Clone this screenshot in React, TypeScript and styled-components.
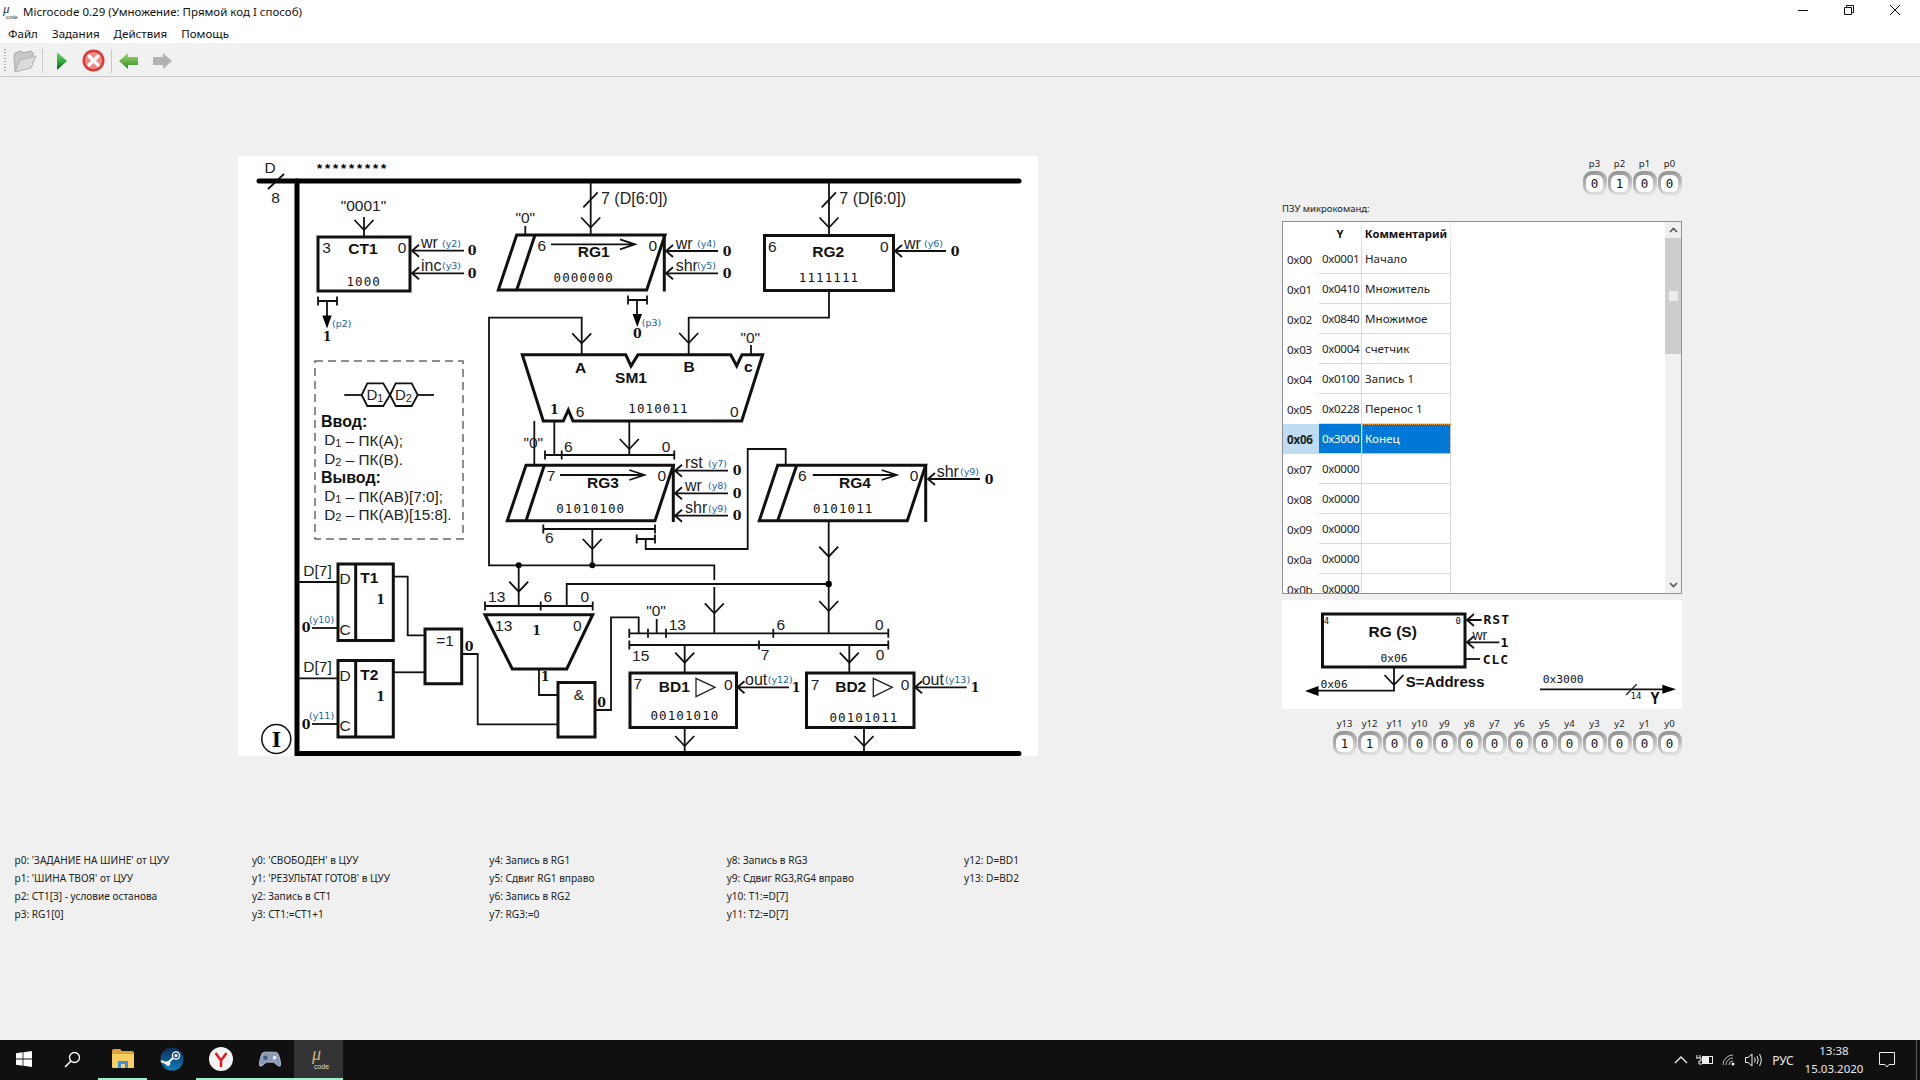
import React from "react";
import styled, { createGlobalStyle } from "styled-components";

const Global = createGlobalStyle`
  html, body { margin: 0; padding: 0; background: #f0f0f0; }
  #root { width: 1920px; height: 1080px; overflow: hidden; }
`;

const UI = `"Noto Sans", "Open Sans", sans-serif`;
const Page = styled.div`
  width: 1920px; height: 1080px; display: flex; flex-direction: column;
  background: #f0f0f0; color: #111; font-family: ${UI}; overflow: hidden;
`;
const TitleBar = styled.div`height: 23px; background: #fff; display: flex; align-items: center; padding-left: 3px;`;
const TitleLogo = styled.span`
  width: 20px; height: 16px; display: flex; flex-direction: column; line-height: 1; color: #333; margin-right: 0;
  font-family: "Liberation Serif", serif;
`;
const Mu = styled.i`font-size: 13px; height: 9px; line-height: 9px; margin-left: 0;`;
const Code = styled.span`font: 5.5px "Liberation Sans", sans-serif; margin-left: 3px; margin-top: 1px;`;
const TitleText = styled.span`font-size: 11.5px; color: #111;`;
const WinButtons = styled.div`margin-left: auto; display: flex; padding-right: 2px; align-self: flex-start; margin-top: 0;`;
const WinBtn = styled.span`width: 46px; height: 20px; display: flex; align-items: center; justify-content: center;`;
const MenuBar = styled.div`height: 20px; background: #fff; display: flex; align-items: center; padding-left: 8px; gap: 14px; font-size: 11.6px;`;
const MenuItem = styled.span`color: #111; padding-bottom: 0;`;
const ToolBar = styled.div`height: 31px; padding-top: 2px; display: flex; align-items: center; border-bottom: 1px solid #c8c8c8; background: #f1f1f1; padding-left: 4px;`;
const Grip = styled.span`width: 2px; height: 24px; margin-right: 6px; background: repeating-linear-gradient(#aaa 0 1px, transparent 1px 3px);`;
const ToolIcon = styled.svg<{ $ml?: number }>`margin-left: ${p => p.$ml ?? 0}px; flex: none;`;
const ToolSep = styled.span<{ $ml: number }>`width: 1px; height: 24px; background: #c9c9c9; margin-left: ${p => p.$ml}px;`;

const Main = styled.div`display: flex; padding: 79px 0 0 238px; align-items: flex-start;`;
const DiagramSvg = styled.svg`width: 800px; height: 600px; display: block; background: #fff; flex: none;`;
const RightCol = styled.div`width: 400px; margin-left: 244px; display: flex; flex-direction: column; padding-top: 1px;`;

const LightRow = styled.div<{ $mt?: number }>`display: flex; justify-content: flex-end; margin-top: ${p => p.$mt ?? 0}px; padding-right: 0;`;
const LightCell = styled.div`width: 25px; display: flex; flex-direction: column; align-items: center;`;
const LightName = styled.span`height: 14px; line-height: 14px; font-size: 9.5px; color: #222;`;
const Light = styled.span`
  width: 24px; height: 24px; border-radius: 9px; display: flex; align-items: center; justify-content: center;
  background: linear-gradient(160deg, #8c8c8c 0%, #b5b5b5 50%, #e2e2e2 85%, #bbb 100%);
`;
const LightFace = styled.span`
  width: 17px; height: 17px; border-radius: 6px; background: #fff; text-align: center;
  font: 12.5px/17px "DejaVu Sans Mono", monospace; color: #111;
`;

const RomLabel = styled.div`height: 14px; line-height: 14px; margin-top: 7px; font-size: 9.5px; color: #222;`;
const RomBox = styled.div`height: 373px; margin-top: 5px; box-sizing: border-box; border: 1px solid #8c9098; background: #fff; display: flex;`;
const RomTable = styled.div`flex: 1; overflow: hidden;`;
const RomRow = styled.div<{ $head?: boolean }>`
  display: grid; grid-template-columns: 36px 43px 89px; height: ${p => (p.$head ? 22 : 30)}px;
  font-size: 11.6px;
`;
const RowHead = styled.div<{ $sel?: boolean }>`
  display: flex; align-items: center; padding-left: 4px; color: #222; letter-spacing: ${p => (p.$sel ? "-.2px" : "-.3px")};
  background: ${p => (p.$sel ? "#bfdcf3" : "#fff")}; font-weight: ${p => (p.$sel ? 700 : 400)};
`;
const Cell = styled.div<{ $sel?: boolean; $focus?: boolean; $code?: boolean }>`
  box-sizing: border-box; display: flex; align-items: center; padding-left: 3px;
  letter-spacing: ${p => (p.$code ? "-.35px" : "0")};
  border-right: 1px solid #d9d9d9; border-bottom: 1px solid #d9d9d9; white-space: nowrap;
  background: ${p => (p.$sel ? "#0078d7" : "#fff")}; color: ${p => (p.$sel ? "#fff" : "#222")};
  outline: ${p => (p.$focus ? "1px dotted #f0a040" : "none")}; outline-offset: -1px;
`;
const HeadCell = styled.div`
  display: flex; align-items: center; justify-content: center; font-weight: 700; font-size: 11.3px; color: #111;
  border-right: 1px solid #ececec; box-sizing: border-box;
`;
const Scroll = styled.div`width: 16px; background: #f0f0f0; display: flex; flex-direction: column; align-items: center;`;
const ScrollBtn = styled.span`height: 16px; width: 16px; display: flex; align-items: center; justify-content: center; flex: none;`;
const Thumb = styled.span`width: 16px; height: 116px; background: #cdcdcd; display: flex; align-items: center; justify-content: center; flex: none;`;
const ThumbMark = styled.span`width: 9px; height: 10px; background: #ededed;`;
const ScrollFill = styled.span`flex: 1;`;
const RgSvg = styled.svg`width: 400px; height: 109px; display: block; margin-top: 6px; background: #fff;`;

const Legend = styled.div`
  margin-top: 95px; padding-left: 14.5px; display: grid; grid-auto-flow: column;
  grid-template-rows: repeat(4, 18px); grid-auto-columns: 237.4px; font-size: 10.1px; color: #222;
`;
const LegendItem = styled.div`line-height: 18px; white-space: nowrap;`;

const TaskBar = styled.div`
  position: absolute; left: 0; top: 1040px; width: 1920px; height: 40px; background: #101010; display: flex; align-items: center; color: #fff;
`;
const TaskBtn = styled.span<{ $w?: number; $on?: boolean; $active?: boolean }>`
  width: ${p => p.$w ?? 49}px; height: 40px; box-sizing: border-box; display: flex; align-items: center; justify-content: center; flex: none;
  background: ${p => (p.$active ? "#333" : "transparent")};
  border-bottom: 2px solid ${p => (p.$on ? "#9ff0cf" : "transparent")};
  background-clip: border-box;
`;
const Tray = styled.div`margin-left: auto; display: flex; align-items: center; height: 40px;`;
const TrayIcon = styled.span<{ $w: number }>`width: ${p => p.$w}px; display: flex; align-items: center; justify-content: center; flex: none; font-size: 12px; color: #e8e8e8;`;
const Clock = styled.span`width: 66px; display: flex; flex-direction: column; align-items: center; font-size: 11.5px; line-height: 18px; color: #e8e8e8; flex: none;`;
const ShowDesktop = styled.span`width: 1px; height: 40px; background: #5a5a5a; margin-left: 9px; margin-right: 3px;`;
const TaskMu = styled.span`display: flex; flex-direction: column; font-family: "Liberation Serif", serif; line-height: 1;`;
const TaskMuTop = styled.i`font-size: 18px; height: 13px; line-height: 13px; color: #d8b080; margin-left: 4px;`;
const TaskMuCode = styled.span`font: 7px "Liberation Sans", sans-serif; color: #ddd; margin-left: 6px; margin-top: 2px;`;

/* diagram parts */
const Wire = styled.path`fill: none; stroke: #111; stroke-width: 1.8;`;
const Heavy = styled.path`fill: none; stroke: #111; stroke-width: 3; stroke-linejoin: miter;`;
const Solid = styled.path`fill: #000; stroke: none;`;
const Bus = styled.path`fill: none; stroke: #000; stroke-width: 5; stroke-linecap: round;`;
const Dashed = styled.rect`fill: none; stroke: #6a6a6a; stroke-width: 1.5; stroke-dasharray: 8 5;`;
const Thin = styled.path`fill: none; stroke: #222; stroke-width: 1.3;`;
const Lbl = styled.text<{ $start?: boolean; $size?: number }>`
  font: ${p => p.$size ?? 15.5}px "Liberation Sans", sans-serif; fill: #222;
  text-anchor: ${p => (p.$start ? "start" : "middle")}; dominant-baseline: central;
`;
const Note = styled.text`font: 15.3px "Liberation Sans", sans-serif; fill: #222; dominant-baseline: central;`;
const NoteHead = styled.text<{ $size?: number }>`font: bold ${p => p.$size ?? 16}px "Liberation Sans", sans-serif; fill: #111; dominant-baseline: central;`;
const Sub = styled.tspan`font-size: 11px;`;
const Name = styled.text`font: bold 15.5px "Liberation Sans", sans-serif; fill: #111; text-anchor: middle; dominant-baseline: central;`;
const Val = styled.text`font: 12.5px "DejaVu Sans Mono", monospace; letter-spacing: 1.1px; fill: #111; text-anchor: middle; dominant-baseline: central;`;
const Bit = styled.text`font: bold 12.5px "DejaVu Serif", serif; fill: #111; text-anchor: middle; dominant-baseline: central;`;
const Tag = styled.text`font: 9.5px "DejaVu Sans", sans-serif; fill: #1a5fa8; dominant-baseline: central;`;
const SigName = styled.text`font: 16px "Liberation Sans", sans-serif; fill: #222;`;
const Roman = styled.text`font: bold 24px "Liberation Serif", serif; fill: #000; text-anchor: middle; dominant-baseline: central;`;
const Stars = styled.text`font: bold 13.5px "Liberation Mono", monospace; fill: #000; letter-spacing: -.1px; dominant-baseline: central;`;
const Ring = styled.circle`fill: none; stroke: #111; stroke-width: 1.5;`;
const Dot = styled.circle`fill: #000;`;
const Mono = styled.text<{ $bold?: boolean; $size?: number; $mid?: boolean; $track?: number }>`
  font: ${p => (p.$bold ? "bold " : "")}${p => p.$size ?? 11.3}px "DejaVu Sans Mono", monospace; fill: #111;
  letter-spacing: ${p => p.$track ?? 0}px;
  text-anchor: ${p => (p.$mid ? "middle" : "start")}; dominant-baseline: central;
`;

const vA = (x: number, t: number) => `M${x - 9.5} ${t - 10}L${x} ${t}L${x + 9.5} ${t - 10}`;
const lA = (x: number, y: number) => `M${x + 7} ${y - 6}L${x} ${y}L${x + 7} ${y + 6}`;
const rA = (x: number, y: number) => `M${x - 15} ${y - 5}L${x} ${y}L${x - 15} ${y + 5}`;
const br = (x1: number, x2: number, y: number, t: number[] = []) =>
  `M${x1} ${y}H${x2}` + [x1, x2, ...t].map(v => `M${v} ${y - 4.5}v9`).join("");
const fDown = (x: number, tip: number) => `M${x - 4.7} ${tip - 13}H${x + 4.7}L${x} ${tip}Z`;

const wires: string[] = [
  "M268 189L284 174",
  "M364 217V237", vA(364, 230),
  br(318, 337, 301), "M327 301V316",
  br(628, 647, 300), "M637 300V316",
  "M525.3 226V235",
  "M590.7 183V234", vA(590.7, 227.5), "M583.3 207.3L597.7 192.3",
  "M829 183V234", vA(829, 227.5), "M821.7 207.3L836 192.3",
  "M829 291V317.7H688.7V354", vA(688.7, 343),
  "M581.7 354V317.7H489V565.3H714.3V580", "M714.3 587V633.3", vA(714.3, 613.3), vA(581.7, 343.3),
  "M751 345V354",
  "M534.3 421V465", "M554.3 421V455", "M629.3 421V455", vA(629.3, 449),
  br(545, 674.3, 455, [561.7]),
  br(543.3, 655, 529), "M592.3 529V565.3", vA(592.3, 549),
  br(636.7, 655, 539), "M645.7 539V549H747.7V449H785.7V465",
  "M828.7 521V633.3", vA(828.7, 556.7), vA(828.7, 611),
  "M518.7 565.3V606", vA(518.7, 591.7),
  "M566.7 606V584H828.7",
  br(485, 592.7, 606, [540.7]),
  "M539 669V695H557",
  "M596 710H611V617.3H638.7V633.3",
  br(629.3, 888.3, 633.3, [648, 666, 773.3]), "M656.7 619V633.3",
  br(629.3, 888.3, 645, [759]),
  "M684.7 645V672", vA(684.7, 662.7),
  "M849.3 645V672", vA(849.3, 662.7),
  "M684.7 728V751", vA(684.7, 746),
  "M864 728V751", vA(864, 746),
  "M298 582H337", "M312 628H337",
  "M298 678.3H337", "M312 724H337",
  "M394 576.7H407.7V635.3H424",
  "M394 672.3H424",
  "M462 654H477.7V724.3H557",
  "M344.3 395H361.7", "M417.7 395H434",
  "M361.7 395L367.3 383.3H383.3L390 395L383.3 406H367.3Z",
  "M390 395L395.7 383.3H411.7L417.7 395L411.7 406H395.7Z",
];
const heavies: string[] = [
  "M318 237H410V291H318Z",
  "M516.7 235H665L646.7 290H498.3Z", "M535 235L516.7 290", "M664.3 235V291.5",
  "M764.5 235.5H893.5V290.5H764.5Z",
  "M522.3 354.7H625.7L631 366L638 354.7H730.7L736.7 366L742 354.7H762.7L741.7 421H573L568.3 410L563.3 421H543.3Z",
  "M526 465.3H673.3L655 520.7H507.3Z", "M544.3 465.3L526 520.7", "M673.3 465V522",
  "M777.7 465.3H925.7L907.3 520.7H759.3Z", "M796.7 465.3L777.7 520.7", "M925.7 465V522",
  "M485 614.7H592.7L566.7 669H512.3Z",
  "M338 564H393.3V640.5H338Z", "M355.7 564V640.5",
  "M338 660.5H393.3V737H338Z", "M355.7 660.5V737",
  "M425 629H461.7V683.7H425Z",
  "M558 682.5H595V737H558Z",
  "M630 673H736.5V727.5H630Z",
  "M806.5 673H914V727.5H806.5Z",
];
const arrows = [
  [551, 635, 244.3], [560, 644.3, 475], [812.7, 896.7, 475],
];
const signals: [number, number, number, string, number, string, number, string, number][] = [
  [412, 250.7, 464, "wr", 421, "(y2)", 442, "0", 472],
  [412, 273.3, 464, "inc", 421, "(y3)", 442, "0", 472],
  [666, 251, 718, "wr", 675.7, "(y4)", 697, "0", 727],
  [666, 273.3, 718, "shr", 675.7, "(y5)", 697, "0", 727],
  [895, 251, 946, "wr", 904, "(y6)", 924, "0", 955],
  [675, 470.7, 728, "rst", 685, "(y7)", 708, "0", 737],
  [675, 493.3, 728, "wr", 685, "(y8)", 708, "0", 737],
  [675, 515.7, 728, "shr", 685, "(y9)", 708, "0", 737],
  [928, 479, 980, "shr", 936.7, "(y9)", 960, "0", 989],
  [737.5, 687.3, 789, "out", 745, "(y12)", 767.7, "1", 796],
  [915, 687.3, 966.7, "out", 921.7, "(y13)", 945, "1", 975],
];
const labels: [number, number, string, number?][] = [
  [270, 167, "D"], [275.5, 197, "8"], [363.5, 205.5, '"0001"'], [326.5, 247, "3"], [402, 247, "0"],
  [525.3, 217.7, '"0"'], [541.7, 245, "6"], [652.7, 245, "0"],
  [772.3, 246, "6"], [884.3, 246, "0"], [750.3, 337, '"0"'],
  [533.3, 442.7, '"0"'], [580, 411.7, "6"], [734.3, 411.7, "0"], [568.3, 446.7, "6"], [666, 446.7, "0"],
  [551, 475, "7"], [661.7, 475, "0"], [549.3, 537.7, "6"], [802.3, 475, "6"], [914, 475, "0"],
  [496.7, 596.7, "13"], [547.7, 596.7, "6"], [584.7, 596.7, "0"], [503.7, 625.7, "13"], [577.3, 625.7, "0"],
  [656, 610.7, '"0"'], [677.3, 624.3, "13"], [780.7, 624.3, "6"], [879.3, 624.3, "0"],
  [640.7, 655, "15"], [765, 654.3, "7"], [880, 654.3, "0"],
  [637.7, 683.3, "7"], [728.3, 684, "0"], [815, 684, "7"], [905, 684, "0"],
  [345, 578.3, "D"], [345, 629, "C"], [345, 675, "D"], [345, 725, "C"],
  [317.5, 570, "D[7]"], [317.5, 666, "D[7]"], [445, 640, "=1"], [579, 694.3, "&"],
];
const names: [number, number, string][] = [
  [363, 248, "CT1"], [593.7, 251.5, "RG1"], [828.3, 251, "RG2"], [580.7, 367, "A"], [631, 377, "SM1"],
  [689, 366.5, "B"], [748.3, 366.5, "c"], [603, 482.5, "RG3"], [855, 482.5, "RG4"], [674.3, 686.5, "BD1"],
  [850.7, 686.5, "BD2"], [369.3, 577.5, "T1"], [369.3, 674, "T2"],
];
const values: [number, number, string][] = [
  [363.7, 281.5, "1000"], [583.7, 277.7, "0000000"], [829, 277.7, "1111111"], [658.5, 408.3, "1010011"],
  [590.7, 508.3, "01010100"], [843.3, 508.7, "0101011"], [685, 715.7, "00101010"], [864, 717.7, "00101011"],
];
const bits: [number, number, string][] = [
  [327, 336, "1"], [637.3, 333, "0"], [554.3, 409.3, "1"], [380.7, 599, "1"], [380.7, 696, "1"],
  [306, 627.7, "0"], [306, 724, "0"], [469, 646.7, "0"], [536.7, 630, "1"], [545, 676.7, "1"], [601.7, 702.3, "0"],
];

function Diagram() {
  return (
    <DiagramSvg viewBox="238 156 800 600">
      <Bus d="M259 181H1019" />
      <Bus d="M297 181V753.5H1019" />
      <Stars x={315.5} y={169}>*********</Stars>
      {wires.map((d, i) => <Wire key={i} d={d} />)}
      {heavies.map((d, i) => <Heavy key={i} d={d} />)}
      {arrows.map(([a, b, y], i) => <Wire key={i} d={`M${a} ${y}H${b}` + rA(b, y)} />)}
      <Solid d={fDown(327, 328.5)} />
      <Solid d={fDown(637.3, 327)} />
      {signals.map(([tip, y, end, n, nx, t, tx, b, bx], i) => (
        <g key={i}>
          <Wire d={`M${tip} ${y}H${end}` + lA(tip, y)} />
          <SigName x={nx} y={y - 2.5}>{n}</SigName>
          <Tag x={tx} y={y - 7.5}>{t}</Tag>
          <Bit x={bx} y={y}>{b}</Bit>
        </g>
      ))}
      <Tag x={332} y={323}>(p2)</Tag>
      <Tag x={641.7} y={322}>(p3)</Tag>
      <Tag x={309} y={619.5}>(y10)</Tag>
      <Tag x={309} y={715.5}>(y11)</Tag>
      {labels.map(([x, y, s], i) => <Lbl key={i} x={x} y={y}>{s}</Lbl>)}
      <Lbl $start $size={16} x={601} y={198.5}>7 (D[6:0])</Lbl>
      <Lbl $start $size={16} x={839.3} y={198.5}>7 (D[6:0])</Lbl>
      {names.map(([x, y, s], i) => <Name key={i} x={x} y={y}>{s}</Name>)}
      {values.map(([x, y, s], i) => <Val key={i} x={x} y={y}>{s}</Val>)}
      {bits.map(([x, y, s], i) => <Bit key={i} x={x} y={y}>{s}</Bit>)}
      <Thin d="M696 678.3L715 687.3L696 696.7Z" />
      <Thin d="M873.3 678.3L892.3 687.3L873.3 696.7Z" />
      <Dot cx={518.7} cy={565.3} r={3} />
      <Dot cx={592.3} cy={565.3} r={3} />
      <Dot cx={828.7} cy={584} r={3.2} />
      <Ring cx={276.3} cy={739} r={14.5} />
      <Roman x={276.3} y={739}>I</Roman>
      <Dashed x={315} y={361} width={148} height={178} />
      <Lbl $start $size={15} x={366.5} y={394.5}>D<Sub dy={3}>1</Sub></Lbl>
      <Lbl $start $size={15} x={395} y={394.5}>D<Sub dy={3}>2</Sub></Lbl>
      <NoteHead x={321} y={421}>Ввод:</NoteHead>
      <Note x={324.3} y={439.5}>D<Sub dy={3}>1</Sub><tspan dy={-3}> – ПК(A);</tspan></Note>
      <Note x={324.3} y={458.5}>D<Sub dy={3}>2</Sub><tspan dy={-3}> – ПК(B).</tspan></Note>
      <NoteHead x={321} y={477.5}>Вывод:</NoteHead>
      <Note x={324.3} y={495.5}>D<Sub dy={3}>1</Sub><tspan dy={-3}> – ПК(AB)[7:0];</tspan></Note>
      <Note x={324.3} y={514}>D<Sub dy={3}>2</Sub><tspan dy={-3}> – ПК(AB)[15:8].</tspan></Note>
    </DiagramSvg>
  );
}

function RgPanel() {
  return (
    <RgSvg viewBox="1282 600 400 109">
      <Heavy d="M1322.5 614H1465V667H1322.5Z" />
      <Mono $size={9} $mid x={1326.5} y={620.7}>4</Mono>
      <Mono $size={9} $mid x={1458.3} y={620.7}>0</Mono>
      <Name x={1392.7} y={631.7}>RG (S)</Name>
      <Mono $mid x={1394} y={658.3}>0x06</Mono>
      <Wire d={`M1467 620H1481.7` + lA(1467, 620)} />
      <Wire d={`M1467 642.3H1499.3` + lA(1467, 642.3)} />
      <Wire d="M1464 659H1480" />
      <Mono $bold $size={13} $track={1} x={1483.5} y={619.7}>RST</Mono>
      <Lbl $start $size={14} x={1472.5} y={635}>wr</Lbl>
      <Mono $bold $size={13} $mid x={1504.5} y={642.3}>1</Mono>
      <Mono $bold $size={13} $track={1} x={1482.7} y={659}>CLC</Mono>
      <Wire d={`M1394 667V690.7H1316` + vA(1394, 685)} />
      <Solid d="M1305 691L1318.5 686V696Z" />
      <Mono x={1320.5} y={684}>0x06</Mono>
      <NoteHead $size={15} x={1405.7} y={681.7}>S=Address</NoteHead>
      <Wire d="M1540 689.3H1664" />
      <Solid d="M1676 689.3L1662.3 684.8V693.8Z" />
      <Thin d="M1626 695L1636.7 684.3" />
      <Mono $size={9} $mid x={1636} y={695.7}>14</Mono>
      <Mono $bold $size={15} $mid x={1655} y={699.3}>Y</Mono>
      <Mono x={1542.7} y={679}>0x3000</Mono>
    </RgSvg>
  );
}

const rows: [string, string, string][] = [
  ["0x00", "0x0001", "Начало"], ["0x01", "0x0410", "Множитель"], ["0x02", "0x0840", "Множимое"],
  ["0x03", "0x0004", "счетчик"], ["0x04", "0x0100", "Запись 1"], ["0x05", "0x0228", "Перенос 1"],
  ["0x06", "0x3000", "Конец"], ["0x07", "0x0000", ""], ["0x08", "0x0000", ""], ["0x09", "0x0000", ""],
  ["0x0a", "0x0000", ""], ["0x0b", "0x0000", ""],
];

const legend = [
  "p0: 'ЗАДАНИЕ НА ШИНЕ' от ЦУУ", "p1: 'ШИНА ТВОЯ' от ЦУУ", "p2: СТ1[3] - условие останова", "p3: RG1[0]",
  "y0: 'СВОБОДЕН' в ЦУУ", "y1: 'РЕЗУЛЬТАТ ГОТОВ' в ЦУУ", "y2: Запись в СТ1", "y3: СТ1:=СТ1+1",
  "y4: Запись в RG1", "y5: Сдвиг RG1 вправо", "y6: Запись в RG2", "y7: RG3:=0",
  "y8: Запись в RG3", "y9: Сдвиг RG3,RG4 вправо", "y10: T1:=D[7]", "y11: T2:=D[7]",
  "y12: D=BD1", "y13: D=BD2",
];

const pSignals: [string, string][] = [["p3", "0"], ["p2", "1"], ["p1", "0"], ["p0", "0"]];
const ySignals = ["1", "1", "0", "0", "0", "0", "0", "0", "0", "0", "0", "0", "0", "0"].map(
  (v, i) => [`y${13 - i}`, v] as [string, string]
);

function Lights({ items, mt }: { items: [string, string][]; mt?: number }) {
  return (
    <LightRow $mt={mt}>
      {items.map(([n, v]) => (
        <LightCell key={n}>
          <LightName>{n}</LightName>
          <Light><LightFace>{v}</LightFace></Light>
        </LightCell>
      ))}
    </LightRow>
  );
}

export default function App() {
  return (
    <Page>
      <Global />
      <TitleBar>
        <TitleLogo><Mu>μ</Mu><Code>code</Code></TitleLogo>
        <TitleText>Microcode 0.29 (Умножение: Прямой код I способ)</TitleText>
        <WinButtons>
          <WinBtn><svg width="10" height="10"><path d="M0 5.5H10" stroke="#111" /></svg></WinBtn>
          <WinBtn><svg width="10" height="10"><path d="M.5 2.5H7.5V9.5H.5ZM2.5 2.5V.5H9.5V7.5H7.5" stroke="#111" fill="none" /></svg></WinBtn>
          <WinBtn><svg width="10" height="10"><path d="M0 0L10 10M10 0L0 10" stroke="#111" /></svg></WinBtn>
        </WinButtons>
      </TitleBar>
      <MenuBar>
        <MenuItem>Файл</MenuItem><MenuItem>Задания</MenuItem><MenuItem>Действия</MenuItem><MenuItem>Помощь</MenuItem>
      </MenuBar>
      <ToolBar>
        <Grip />
        <ToolIcon width="25" height="24" viewBox="0 0 25 24">
          <path d="M2 7L3 4L9 2L11 4L19 2L21 4L21 14L6 22H3Z" fill="#c8c8c8" stroke="#a8a8a8" />
          <path d="M3 23L8 11L24 7L19 19Z" fill="#dcdcdc" stroke="#b0b0b0" />
        </ToolIcon>
        <ToolSep $ml={5} />
        <ToolIcon $ml={14} width="10" height="18" viewBox="0 0 10 18">
          <defs><linearGradient id="play" x1="0" y1="0" x2="0" y2="1"><stop offset="0" stopColor="#6fe05a" /><stop offset=".55" stopColor="#2fa53c" /><stop offset="1" stopColor="#0b5526" /></linearGradient></defs>
          <path d="M0 0L10 9L0 18Z" fill="url(#play)" />
        </ToolIcon>
        <ToolIcon $ml={15} width="23" height="23" viewBox="0 0 23 23">
          <circle cx="11.5" cy="11.5" r="11" fill="#d93a3a" />
          <circle cx="11.5" cy="11.5" r="8.6" fill="#ee8a86" />
          <path d="M7 7L16 16M16 7L7 16" stroke="#fff" strokeWidth="3.4" strokeLinecap="round" />
        </ToolIcon>
        <ToolSep $ml={6} />
        <ToolIcon $ml={7} width="19" height="16" viewBox="0 0 19 16">
          <defs><linearGradient id="back" x1="0" y1="0" x2="0" y2="1"><stop offset="0" stopColor="#a5dc6a" /><stop offset="1" stopColor="#2f8a2a" /></linearGradient></defs>
          <path d="M0 8L9 0V4H19V12H9V16Z" fill="url(#back)" />
        </ToolIcon>
        <ToolIcon $ml={15} width="19" height="16" viewBox="0 0 19 16">
          <path d="M19 8L10 0V4H0V12H10V16Z" fill="#b2b2b2" />
        </ToolIcon>
      </ToolBar>
      <Main>
        <Diagram />
        <RightCol>
          <Lights items={pSignals} />
          <RomLabel>ПЗУ микрокоманд:</RomLabel>
          <RomBox>
            <RomTable>
              <RomRow $head>
                <RowHead />
                <HeadCell>Y</HeadCell>
                <HeadCell>Комментарий</HeadCell>
              </RomRow>
              {rows.map(([a, y, c], i) => (
                <RomRow key={a}>
                  <RowHead $sel={i === 6}>{a}</RowHead>
                  <Cell $sel={i === 6} $code>{y}</Cell>
                  <Cell $sel={i === 6} $focus={i === 6}>{c}</Cell>
                </RomRow>
              ))}
            </RomTable>
            <Scroll>
              <ScrollBtn><svg width="9" height="6"><path d="M1 5L4.5 1.5L8 5" stroke="#555" strokeWidth="1.6" fill="none" /></svg></ScrollBtn>
              <Thumb><ThumbMark /></Thumb>
              <ScrollFill />
              <ScrollBtn><svg width="9" height="6"><path d="M1 1L4.5 4.5L8 1" stroke="#555" strokeWidth="1.6" fill="none" /></svg></ScrollBtn>
            </Scroll>
          </RomBox>
          <RgPanel />
          <Lights items={ySignals} mt={8} />
        </RightCol>
      </Main>
      <Legend>
        {legend.map(s => <LegendItem key={s}>{s}</LegendItem>)}
      </Legend>
      <TaskBar>
        <TaskBtn $w={48}>
          <svg width="16" height="16" viewBox="0 0 16 16"><path d="M0 2.2L6.6 1.3V7.6H0ZM7.4 1.2L16 0V7.6H7.4ZM0 8.4H6.6V14.7L0 13.8ZM7.4 8.4H16V16L7.4 14.8Z" fill="#fff" /></svg>
        </TaskBtn>
        <TaskBtn $w={48}>
          <svg width="17" height="17" viewBox="0 0 17 17"><circle cx="10.5" cy="6.5" r="5" stroke="#fff" strokeWidth="1.3" fill="none" /><path d="M7 10L1 16" stroke="#fff" strokeWidth="1.6" /></svg>
        </TaskBtn>
        <TaskBtn $w={2} />
        <TaskBtn $on>
          <svg width="22" height="20" viewBox="0 0 22 20">
            <path d="M0 2Q0 0 2 0H8L10 2H20Q22 2 22 4V6H0Z" fill="#d9a23a" />
            <path d="M0 5H22V18Q22 19 21 19H1Q0 19 0 18Z" fill="#f8cf5e" />
            <path d="M6 19V12H16V19H13V15H9V19Z" fill="#3b8fe0" />
          </svg>
        </TaskBtn>
        <TaskBtn>
          <svg width="24" height="24" viewBox="0 0 24 24">
            <defs><linearGradient id="steam" x1="0" y1="0" x2="0" y2="1"><stop offset="0" stopColor="#0f2a58" /><stop offset="1" stopColor="#0f7fb8" /></linearGradient></defs>
            <circle cx="12" cy="12" r="11.5" fill="url(#steam)" />
            <circle cx="16" cy="8.5" r="3.6" fill="none" stroke="#fff" strokeWidth="1.3" />
            <circle cx="16" cy="8.5" r="1.6" fill="#fff" />
            <path d="M1 14L7 16.5L13 11" stroke="#fff" strokeWidth="2" fill="none" />
            <circle cx="8" cy="16.5" r="2.4" fill="#fff" />
          </svg>
        </TaskBtn>
        <TaskBtn $on>
          <svg width="24" height="24" viewBox="0 0 24 24">
            <circle cx="12" cy="12" r="12" fill="#f2f2f2" />
            <path d="M6.5 6L12 13.5L17.5 6M12 13V20" stroke="#e8141c" strokeWidth="2.4" fill="none" />
          </svg>
        </TaskBtn>
        <TaskBtn $on>
          <svg width="22" height="17" viewBox="0 0 24 18">
            <path d="M6 1H18Q21 1 22 6L24 14Q24 17 21 16L16 12H8L3 16Q0 17 0 14L2 6Q3 1 6 1Z" fill="#8a9ab4" stroke="#dde6f2" strokeWidth=".7" />
            <circle cx="7" cy="7" r="2.4" fill="#41597e" />
            <circle cx="17" cy="7" r="2" fill="#e5eaf2" />
          </svg>
        </TaskBtn>
        <TaskBtn $on $active>
          <TaskMu><TaskMuTop>μ</TaskMuTop><TaskMuCode>code</TaskMuCode></TaskMu>
        </TaskBtn>
        <Tray>
          <TrayIcon $w={24}><svg width="14" height="8"><path d="M1 7L7 1L13 7" stroke="#eee" strokeWidth="1.3" fill="none" /></svg></TrayIcon>
          <TrayIcon $w={24}>
            <svg width="18" height="10"><path d="M1 0V3M4 0V3M0 3H5V6H3V9H6" stroke="#eee" fill="none" /><rect x="6.5" y="1.5" width="10" height="7" stroke="#eee" fill="none" /><rect x="7" y="2" width="6" height="6" fill="#eee" /></svg>
          </TrayIcon>
          <TrayIcon $w={24}>
            <svg width="14" height="12" viewBox="0 0 14 12"><path d="M1 11A10 10 0 0 1 11 1M4 11A7 7 0 0 1 11 4M7 11A4 4 0 0 1 11 7" stroke="#bbb" fill="none" /><circle cx="11" cy="10" r="1.5" fill="#eee" /></svg>
          </TrayIcon>
          <TrayIcon $w={24}>
            <svg width="17" height="14" viewBox="0 0 17 14"><path d="M.5 4.5H3L7 1V13L3 9.5H.5Z" stroke="#eee" fill="none" /><path d="M9.5 4.5Q11 7 9.5 9.5M12 3Q14.5 7 12 11M14.5 1Q18 7 14.5 13" stroke="#eee" fill="none" /></svg>
          </TrayIcon>
          <TrayIcon $w={36}>РУС</TrayIcon>
          <Clock><span>13:38</span><span>15.03.2020</span></Clock>
          <TrayIcon $w={40}>
            <svg width="16" height="16" viewBox="0 0 16 16"><path d="M.5 .5H15.5V12.5H10L8 15L6 12.5H.5Z" stroke="#eee" fill="none" /></svg>
          </TrayIcon>
          <ShowDesktop />
        </Tray>
      </TaskBar>
    </Page>
  );
}
